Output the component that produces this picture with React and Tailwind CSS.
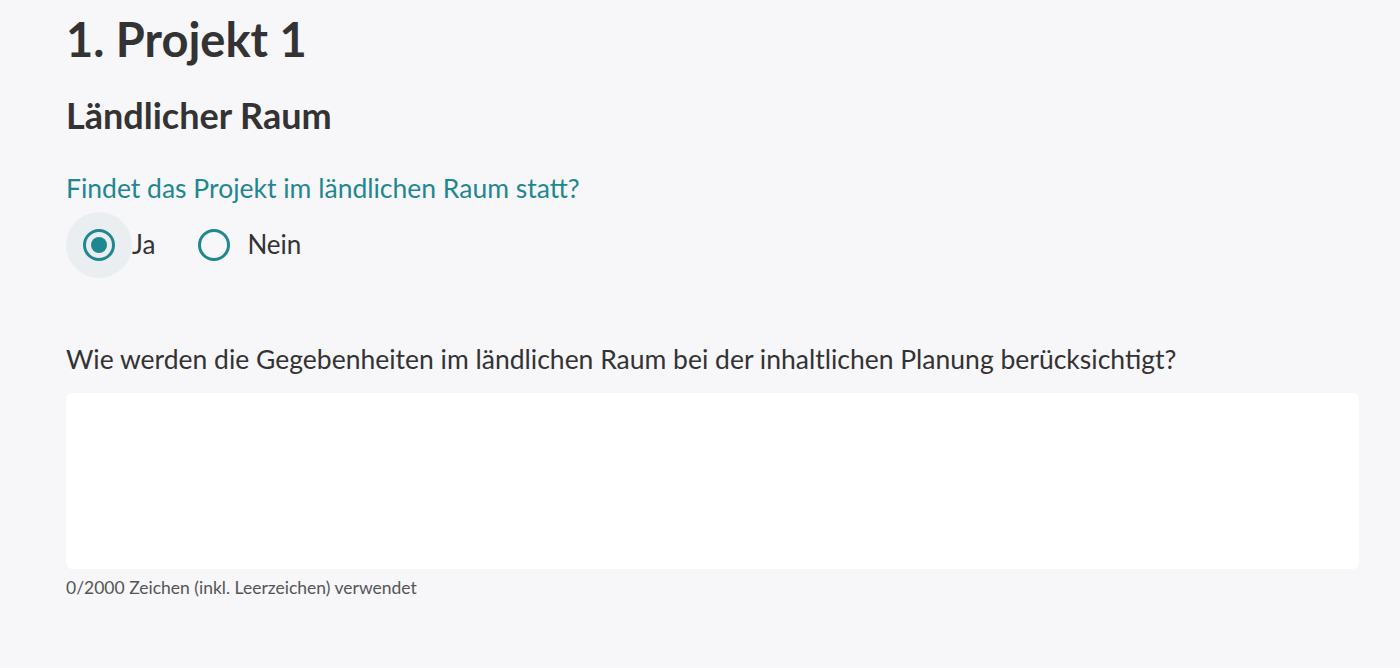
import React, { useState } from 'react'

function Radio({ checked, label, onClick, halo }) {
  return (
    <label onClick={onClick} className="flex items-center cursor-pointer">
      <span className={`flex items-center justify-center w-[66px] h-[66px] rounded-full ${halo ? 'bg-[#ebeef0]' : ''}`}>
        <span className="flex items-center justify-center w-[32px] h-[32px] rounded-full border-[3px] border-[#1f8790]">
          {checked && <span className="w-[16px] h-[16px] rounded-full bg-[#1f8790]" />}
        </span>
      </span>
      <span className="text-[26px] text-[#333]">{label}</span>
    </label>
  )
}

export default function App() {
  const [value, setValue] = useState('ja')
  const [text, setText] = useState('')
  return (
    <div className="min-h-screen bg-[#f7f6f9] text-[#333] pl-[66px] pr-[41px]" style={{ fontFamily: 'Lato, "Noto Sans", sans-serif' }}>
      <h1 className="text-[47px] font-bold leading-none pt-[16px]">1. Projekt 1</h1>
      <h2 className="text-[36px] font-bold leading-none mt-[34px]">Ländlicher Raum</h2>
      <p className="text-[26.5px] text-[#1f8790] mt-[42px] leading-none">Findet das Projekt im ländlichen Raum statt?</p>
      <div className="flex items-center gap-[26px] mt-[10px]">
        <Radio checked={value === 'ja'} label="Ja" halo onClick={() => setValue('ja')} />
        <Radio checked={value === 'nein'} label="Nein" onClick={() => setValue('nein')} />
      </div>
      <p className="text-[26.5px] mt-[68px] leading-none">Wie werden die Gegebenheiten im ländlichen Raum bei der inhaltlichen Planung berücksichtigt?</p>
      <textarea value={text} onChange={e => setText(e.target.value)} className="block w-full h-[176px] mt-[21px] bg-white rounded-[6px] outline-none resize-none p-3 text-[20px]" />
      <p className="text-[17.5px] text-[#555] mt-[6px]">{text.length}/2000 Zeichen (inkl. Leerzeichen) verwendet</p>
    </div>
  )
}
